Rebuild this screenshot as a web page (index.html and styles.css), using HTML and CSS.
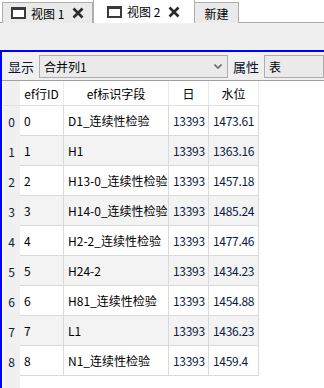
FILE: index.html
```html
<!DOCTYPE html>
<html lang="zh">
<head>
  <meta charset="UTF-8" />
  <title>视图</title>
  <link rel="stylesheet" href="styles.css">
</head>
<body>

  <div class="tabbar">
    <div class="tab tab-one">
      <svg class="win-icon" viewBox="0 0 15 12"><rect width="15" height="12" fill="#3a3a3a"/><rect x="2" y="3" width="11" height="7" fill="#fff"/></svg>
      <span class="tab-label">视图 1</span>
      <svg class="close-icon" viewBox="0 0 12 12"><path d="M1.5 1.5L10.5 10.5M10.5 1.5L1.5 10.5"/></svg>
    </div>
    <div class="tab tab-two active">
      <svg class="win-icon" viewBox="0 0 15 12"><rect width="15" height="12" fill="#3a3a3a"/><rect x="2" y="3" width="11" height="7" fill="#fff"/></svg>
      <span class="tab-label">视图 2</span>
      <svg class="close-icon" viewBox="0 0 12 12"><path d="M1.5 1.5L10.5 10.5M10.5 1.5L1.5 10.5"/></svg>
    </div>
    <div class="tab tab-new">新建</div>
  </div>

  <div class="gap-strip"></div>

  <div class="frame">
    <div class="toolbar">
      <span class="tool-label">显示</span>
      <div class="combo combo-main">
        <span>合并列1</span>
        <svg class="chevron" viewBox="0 0 8 5"><path d="M0.5 0.5L4 4L7.5 0.5"/></svg>
      </div>
      <span class="tool-label">属性</span>
      <div class="combo combo-side"><span>表</span></div>
    </div>

    <div class="sheet">
      <div class="grid">
        <div class="rh head"></div>
        <div class="hc">ef行ID</div>
        <div class="hc">ef标识字段</div>
        <div class="hc">日</div>
        <div class="hc">水位</div>

        <div class="rh">0</div><div class="c">0</div><div class="c">D1_连续性检验</div><div class="c n">13393</div><div class="c n">1473.61</div>
        <div class="rh">1</div><div class="c alt">1</div><div class="c alt">H1</div><div class="c n alt">13393</div><div class="c n alt">1363.16</div>
        <div class="rh">2</div><div class="c">2</div><div class="c">H13-0_连续性检验</div><div class="c n">13393</div><div class="c n">1457.18</div>
        <div class="rh">3</div><div class="c alt">3</div><div class="c alt">H14-0_连续性检验</div><div class="c n alt">13393</div><div class="c n alt">1485.24</div>
        <div class="rh">4</div><div class="c">4</div><div class="c">H2-2_连续性检验</div><div class="c n">13393</div><div class="c n">1477.46</div>
        <div class="rh">5</div><div class="c alt">5</div><div class="c alt">H24-2</div><div class="c n alt">13393</div><div class="c n alt">1434.23</div>
        <div class="rh">6</div><div class="c">6</div><div class="c">H81_连续性检验</div><div class="c n">13393</div><div class="c n">1454.88</div>
        <div class="rh">7</div><div class="c alt">7</div><div class="c alt">L1</div><div class="c n alt">13393</div><div class="c n alt">1436.23</div>
        <div class="rh">8</div><div class="c">8</div><div class="c">N1_连续性检验</div><div class="c n">13393</div><div class="c n">1459.4</div>
      </div>
      <div class="tail">
        <div class="tail-head"></div>
      </div>
    </div>
  </div>

</body>
</html>
```

FILE: styles.css
```css
html, body {
  height: 100%;
}

body {
  margin: 0;
  background: #fff;
  font-family: "Noto Sans CJK SC", "Noto Sans", sans-serif;
  font-size: 12px;
  color: #000;
  display: flex;
  flex-direction: column;
  overflow: hidden;
}

/* tabs */
.tabbar {
  height: 22px;
  flex-shrink: 0;
  border-bottom: 1px solid #a8a8a8;
  display: flex;
  align-items: flex-end;
  padding-left: 2px;
}

.tab {
  box-sizing: border-box;
  height: 21px;
  margin-bottom: -1px;
  border: 1px solid #adadad;
  border-bottom: none;
  background: #eaeaea;
  display: flex;
  align-items: center;
}

.tab-one {
  width: 91px;
  padding-left: 8px;
}

.tab-two {
  width: 102px;
  padding-left: 13px;
}

.tab.active {
  height: 23px;
  background: #fff;
  border-top: none;
}

.tab-new {
  width: 45px;
  margin-left: -1px;
  justify-content: center;
  padding-top: 1px;
}

.win-icon {
  width: 15px;
  height: 12px;
  flex-shrink: 0;
}

.tab-label {
  margin-left: 5px;
  white-space: pre;
}

.close-icon {
  width: 12px;
  height: 12px;
  margin-left: 8px;
  fill: none;
  stroke: #2a2a2a;
  stroke-width: 2.6;
}

.gap-strip {
  height: 27px;
  flex-shrink: 0;
  background: #f0f0f0;
}

/* blue framed panel */
.frame {
  flex: 1;
  display: flex;
  flex-direction: column;
  border-top: 2px solid #0000ff;
  border-left: 2px solid #0000ff;
  min-height: 0;
}

.toolbar {
  height: 28px;
  box-sizing: border-box;
  flex-shrink: 0;
  background: #f0f0f0;
  display: flex;
  align-items: flex-start;
  padding: 3px 0 0 6px;
  gap: 5px;
  white-space: nowrap;
}

.tool-label {
  font-size: 13px;
  line-height: 23px;
  color: #0c1230;
}

.combo {
  box-sizing: border-box;
  height: 23px;
  border: 1px solid #adadad;
  background: #eaeaea;
  display: flex;
  align-items: center;
  padding-left: 4px;
}

.combo-main {
  width: 236px;
  justify-content: space-between;
  padding-right: 5px;
}

.combo-side {
  width: 60px;
  flex-shrink: 0;
}

.chevron {
  width: 8px;
  height: 5px;
  fill: none;
  stroke: #6a6a6a;
  stroke-width: 1.6;
}

/* table */
.sheet {
  flex: 1;
  display: flex;
  flex-direction: column;
  border-top: 1px solid #a0a0a0;
  padding-left: 1px;
  background: #fff;
}

.grid {
  display: grid;
  grid-template-columns: 17px 44px 105px 40px 50px;
  grid-template-rows: 25px repeat(9, 30px);
}

.grid > div {
  box-sizing: border-box;
  display: flex;
  align-items: center;
  white-space: nowrap;
  overflow: hidden;
}

.rh {
  background: #f0f0f0;
  justify-content: center;
  color: #0c1a3a;
}

.rh.head {
  border-bottom: 1px solid #e2e2e2;
}

.hc {
  justify-content: center;
  border-right: 1px solid #e3ebf7;
  border-bottom: 1px solid #e2e2e2;
}

.c {
  padding-left: 4px;
  border-right: 1px solid #d9d9d9;
  border-bottom: 1px solid #d9d9d9;
}

.c.n {
  letter-spacing: -0.3px;
  color: #0a1a40;
}

.c.alt {
  background: #f3f3f3;
}

.tail {
  flex: 1;
  display: flex;
}

.tail-head {
  width: 17px;
  background: #f0f0f0;
}
```
